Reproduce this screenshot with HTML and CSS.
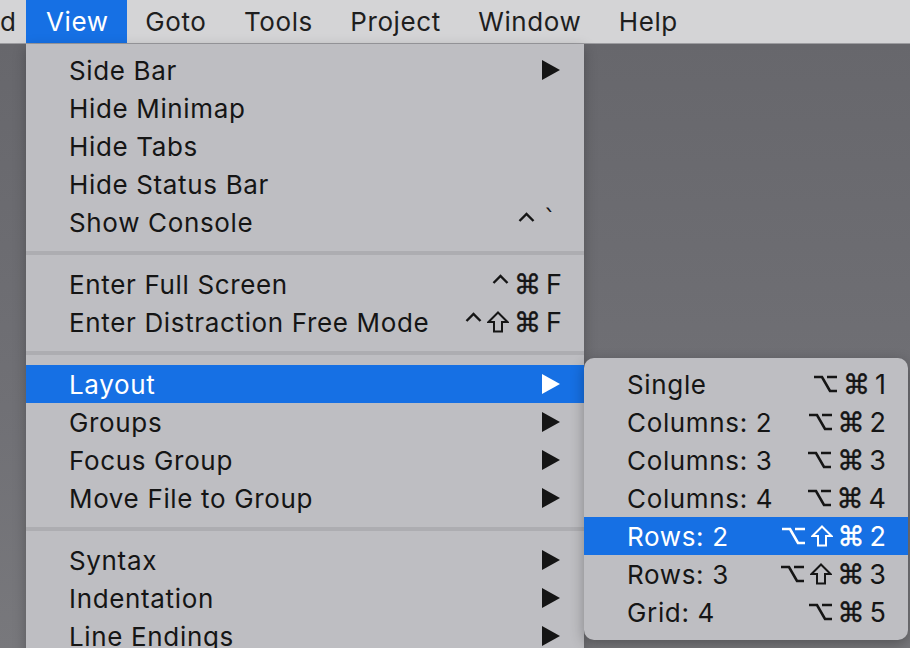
FILE: index.html
```html
<!DOCTYPE html>
<html>
<head>
<meta charset="utf-8">
<link rel="stylesheet" href="styles.css">
</head>
<body>
<div class="screen">
  <div class="menubar">
    <div class="mb-item mb-cut">d</div>
    <div class="mb-item active">View</div>
    <div class="mb-item">Goto</div>
    <div class="mb-item">Tools</div>
    <div class="mb-item">Project</div>
    <div class="mb-item">Window</div>
    <div class="mb-item">Help</div>
  </div>
  <div class="desktop">
    <div class="menu main">
      <div class="row"><span class="label">Side Bar</span><svg class="arrow" viewBox="0 0 18 20"><polygon points="0,0 18,10 0,20"/></svg></div>
      <div class="row"><span class="label">Hide Minimap</span></div>
      <div class="row"><span class="label">Hide Tabs</span></div>
      <div class="row"><span class="label">Hide Status Bar</span></div>
      <div class="row"><span class="label">Show Console</span><span class="keys console"><svg class="k-ctrl" viewBox="0 0 17 10"><polyline points="1.5,9 8.5,2 15.5,9"/></svg><span class="k-tick">`</span></span></div>
      <div class="sep"></div>
      <div class="row"><span class="label">Enter Full Screen</span><span class="keys"><svg class="k-ctrl" viewBox="0 0 17 10"><polyline points="1.5,9 8.5,2 15.5,9"/></svg><span class="k-cmd">⌘</span><span class="k-ch">F</span></span></div>
      <div class="row"><span class="label">Enter Distraction Free Mode</span><span class="keys"><svg class="k-ctrl" viewBox="0 0 17 10"><polyline points="1.5,9 8.5,2 15.5,9"/></svg><svg class="k-shift" viewBox="0 0 22 22"><path d="M11,1.5 L20.5,11 H15 V20.5 H7 V11 H1.5 Z"/></svg><span class="k-cmd">⌘</span><span class="k-ch">F</span></span></div>
      <div class="sep"></div>
      <div class="row hl"><span class="label">Layout</span><svg class="arrow" viewBox="0 0 18 20"><polygon points="0,0 18,10 0,20"/></svg></div>
      <div class="row"><span class="label">Groups</span><svg class="arrow" viewBox="0 0 18 20"><polygon points="0,0 18,10 0,20"/></svg></div>
      <div class="row"><span class="label">Focus Group</span><svg class="arrow" viewBox="0 0 18 20"><polygon points="0,0 18,10 0,20"/></svg></div>
      <div class="row"><span class="label">Move File to Group</span><svg class="arrow" viewBox="0 0 18 20"><polygon points="0,0 18,10 0,20"/></svg></div>
      <div class="sep"></div>
      <div class="row"><span class="label">Syntax</span><svg class="arrow" viewBox="0 0 18 20"><polygon points="0,0 18,10 0,20"/></svg></div>
      <div class="row"><span class="label">Indentation</span><svg class="arrow" viewBox="0 0 18 20"><polygon points="0,0 18,10 0,20"/></svg></div>
      <div class="row"><span class="label">Line Endings</span><svg class="arrow" viewBox="0 0 18 20"><polygon points="0,0 18,10 0,20"/></svg></div>
    </div>
    <div class="menu sub">
      <div class="row"><span class="label">Single</span><span class="keys"><svg class="k-opt" viewBox="0 0 25 18"><path d="M1,2 H9 L17,16 H24 M14,2 H24"/></svg><span class="k-cmd">⌘</span><span class="k-ch">1</span></span></div>
      <div class="row"><span class="label">Columns: 2</span><span class="keys"><svg class="k-opt" viewBox="0 0 25 18"><path d="M1,2 H9 L17,16 H24 M14,2 H24"/></svg><span class="k-cmd">⌘</span><span class="k-ch">2</span></span></div>
      <div class="row"><span class="label">Columns: 3</span><span class="keys"><svg class="k-opt" viewBox="0 0 25 18"><path d="M1,2 H9 L17,16 H24 M14,2 H24"/></svg><span class="k-cmd">⌘</span><span class="k-ch">3</span></span></div>
      <div class="row"><span class="label">Columns: 4</span><span class="keys"><svg class="k-opt" viewBox="0 0 25 18"><path d="M1,2 H9 L17,16 H24 M14,2 H24"/></svg><span class="k-cmd">⌘</span><span class="k-ch">4</span></span></div>
      <div class="row hl"><span class="label">Rows: 2</span><span class="keys"><svg class="k-opt" viewBox="0 0 25 18"><path d="M1,2 H9 L17,16 H24 M14,2 H24"/></svg><svg class="k-shift" viewBox="0 0 22 22"><path d="M11,1.5 L20.5,11 H15 V20.5 H7 V11 H1.5 Z"/></svg><span class="k-cmd">⌘</span><span class="k-ch">2</span></span></div>
      <div class="row"><span class="label">Rows: 3</span><span class="keys"><svg class="k-opt" viewBox="0 0 25 18"><path d="M1,2 H9 L17,16 H24 M14,2 H24"/></svg><svg class="k-shift" viewBox="0 0 22 22"><path d="M11,1.5 L20.5,11 H15 V20.5 H7 V11 H1.5 Z"/></svg><span class="k-cmd">⌘</span><span class="k-ch">3</span></span></div>
      <div class="row"><span class="label">Grid: 4</span><span class="keys"><svg class="k-opt" viewBox="0 0 25 18"><path d="M1,2 H9 L17,16 H24 M14,2 H24"/></svg><span class="k-cmd">⌘</span><span class="k-ch">5</span></span></div>
    </div>
  </div>
</div>
</body>
</html>
```
FILE: styles.css
```css
html, body {
  margin: 0;
  padding: 0;
}
body {
  width: 910px;
  height: 648px;
  overflow: hidden;
  font-family: "Inter", "Liberation Sans", sans-serif;
  font-size: 26px;
  letter-spacing: 0.65px;
  color: #151515;
}
.screen {
  width: 910px;
  height: 648px;
  display: flex;
  flex-direction: column;
}
.menubar {
  height: 44px;
  flex: none;
  display: flex;
  align-items: stretch;
  background: #d4d4d6;
  border-bottom: 1px solid #9c9ca0;
  box-sizing: border-box;
  letter-spacing: 0.6px;
}
.mb-item {
  display: flex;
  align-items: center;
  padding: 0 18.7px;
  color: #1e1e1e;
}
.mb-cut {
  width: 26px;
  box-sizing: border-box;
  padding: 0 18px 0 0;
  justify-content: flex-end;
  direction: rtl;
  overflow: hidden;
}
.mb-item.active {
  background: #1670e4;
  color: #ffffff;
  padding: 0 18px 0 20px;
}
.desktop {
  flex: 1;
  position: relative;
  background: linear-gradient(180deg, #67676c 0%, #707075 60%, #78787c 100%);
}
.menu {
  position: absolute;
  background: #bebec2;
  box-sizing: border-box;
}
.main {
  left: 26px;
  top: 0;
  width: 558px;
  height: 620px;
  padding-top: 7px;
  box-shadow: 0 4px 12px rgba(0,0,0,0.25);
}
.sub {
  left: 584px;
  top: 314px;
  width: 324px;
  padding: 7px 0 9px;
  border-radius: 10px;
  box-shadow: 0 4px 14px rgba(0,0,0,0.3);
}
.row {
  height: 38px;
  display: flex;
  align-items: center;
  justify-content: space-between;
  padding: 0 25px 0 43px;
}
.sub .row {
  padding: 0 22px 0 43px;
}
.row.hl {
  background: #1670e4;
  color: #ffffff;
}
.arrow {
  width: 18px;
  height: 20px;
  fill: currentColor;
  margin-right: -1px;
}
.keys {
  display: flex;
  align-items: center;
  gap: 5px;
  letter-spacing: 0;
}
.main .keys {
  margin-right: -3px;
}
.main .keys.console {
  margin-right: 3px;
  gap: 9px;
}
.keys svg {
  fill: none;
  stroke: currentColor;
}
.k-ctrl {
  width: 17px;
  height: 10px;
  stroke-width: 2.4;
  margin-top: -10px;
}
.k-shift {
  width: 22px;
  height: 22px;
  stroke-width: 2;
}
.k-opt {
  width: 25px;
  height: 18px;
  stroke-width: 2.6;
}
.k-tick {
  font-family: "DejaVu Sans", sans-serif;
  font-size: 24px;
  margin-top: -6px;
}
.k-cmd {
  font-family: "DejaVu Sans", sans-serif;
  font-size: 27px;
  line-height: 1;
  -webkit-text-stroke: 0.4px currentColor;
}
.k-ch {
  line-height: 1;
  font-size: 27px;
}
.sep {
  height: 24px;
  display: flex;
  align-items: center;
}
.sep::before {
  content: "";
  display: block;
  width: 100%;
  height: 4px;
  background: #adadb1;
}
```
